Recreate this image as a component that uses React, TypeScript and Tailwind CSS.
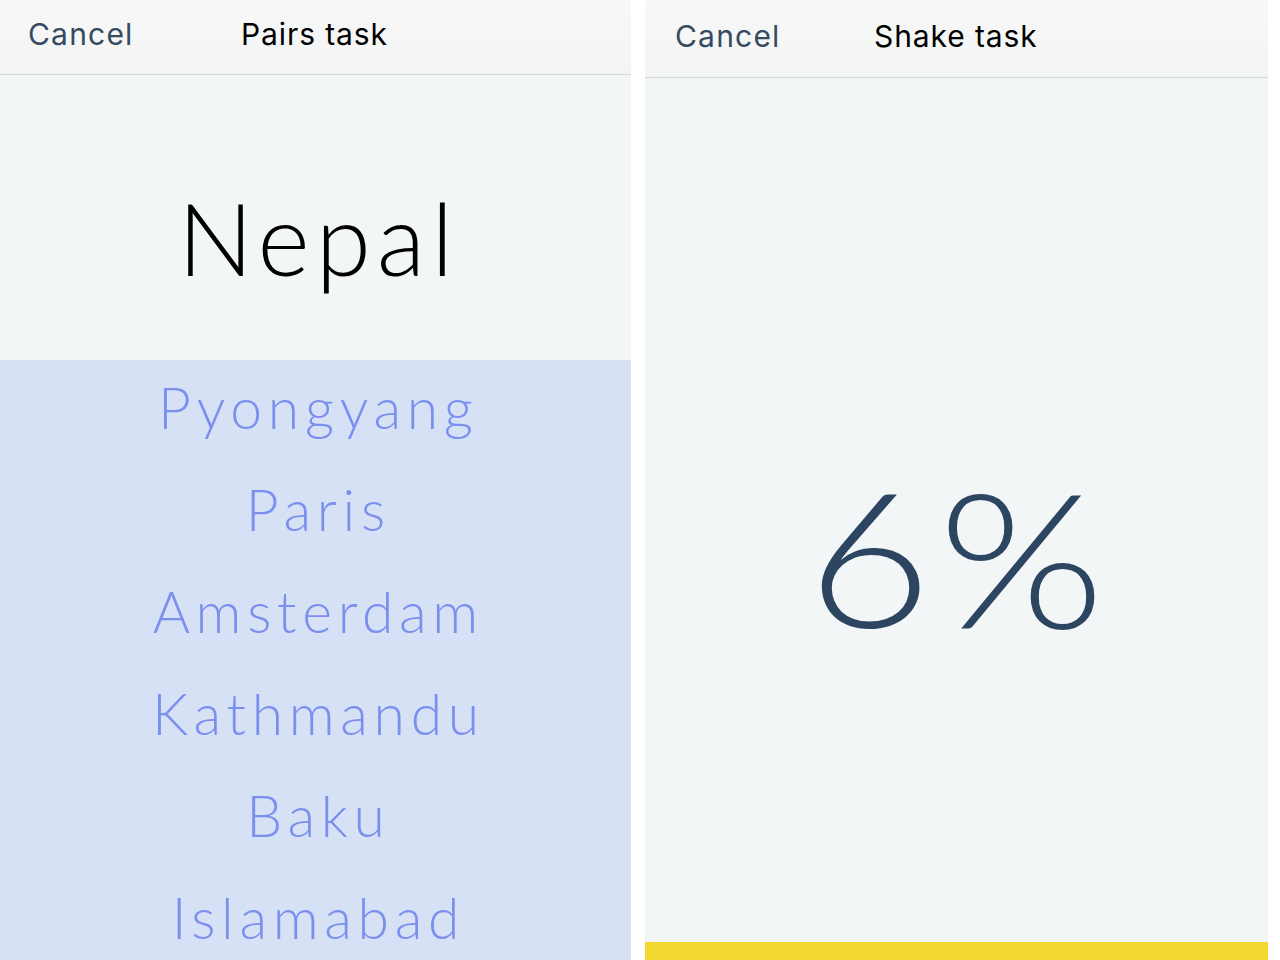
import React from 'react'

const cities = ["Pyongyang", "Paris", "Amsterdam", "Kathmandu", "Baku", "Islamabad"];

const uiFont = { fontFamily: 'Inter, "Noto Sans", sans-serif' };
const thinFont = { fontFamily: 'Lato, "Open Sans", sans-serif' };

// Top nav bar shared by both screens
const NavBar: React.FC<{ title: string; gap: string; className?: string }> = ({ title, gap, className }) => (
  <div className={`flex items-center shrink-0 bg-gradient-to-b from-[#f8f8f8] to-[#f3f4f4] border-b border-[#d6d8d9] ${className ?? ""}`}>
    <span className={`text-[30px] text-[#364a60] tracking-[0.04em] ${gap}`}>Cancel</span>
    <span className="text-[30px] text-black tracking-[0.03em]">{title}</span>
  </div>
);

export default function App() {
  return (
    <div className="flex w-[1280px] h-[960px] bg-white overflow-hidden" style={uiFont}>
      {/* Pairs task */}
      <div className="flex flex-col w-[631px] h-full bg-[#f3f6f7] overflow-hidden">
        <NavBar title="Pairs task" gap="w-[213px]" className="h-[75px] pl-[28px] pb-[6px]" />
        <div className="flex items-center justify-center h-[285px] shrink-0 pt-[38px]" style={thinFont}>
          <span className="text-[100px] font-light text-black leading-none tracking-[0.06em] pl-[0.06em]">Nepal</span>
        </div>
        <div className="flex-1 flex flex-col items-center bg-[#d6e1f5]" style={thinFont}>
          {cities.map((c) => (
            <div key={c} className="h-[102px] pb-[8px] flex items-center text-[57px] font-light text-[#7b8fef] leading-none tracking-[0.1em] pl-[0.1em] shrink-0">
              {c}
            </div>
          ))}
        </div>
      </div>

      <div className="w-[14px] shrink-0" />

      {/* Shake task */}
      <div className="flex flex-col w-[623px] h-full bg-[#f3f6f7]">
        <NavBar title="Shake task" gap="w-[199px]" className="h-[78px] pl-[30px] pb-[4px]" />
        <div className="flex-1 flex items-center justify-center pt-[90px]" style={thinFont}>
          <span className="text-[188px] font-light text-[#2c4561] leading-none scale-x-[1.14] tracking-[0.03em] pl-[0.03em]">6%</span>
        </div>
        <div className="h-[18px] shrink-0 bg-[#f3d731]" />
      </div>
    </div>
  );
}
